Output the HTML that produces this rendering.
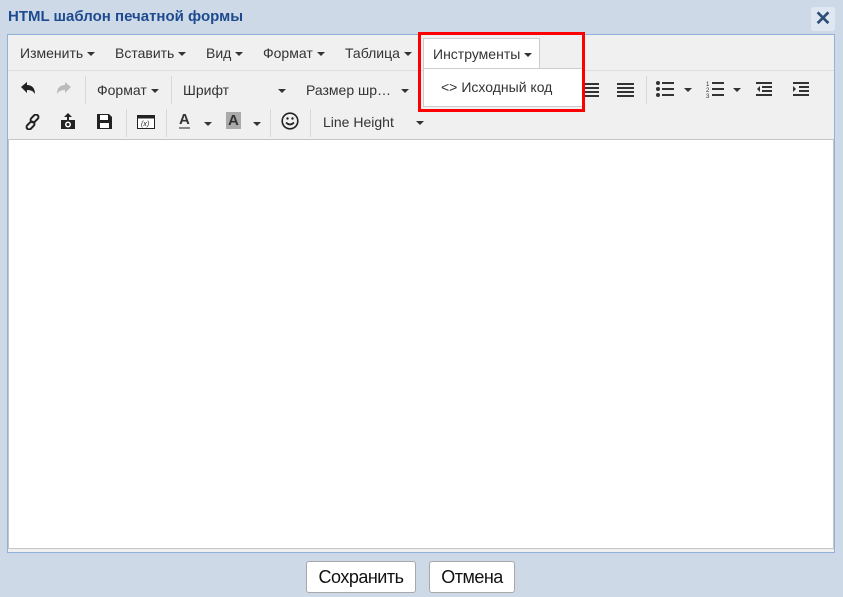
<!DOCTYPE html>
<html><head><meta charset="utf-8"><style>
*{box-sizing:border-box;margin:0;padding:0}
body{width:843px;height:597px;background:#cdd9e6;font-family:"Liberation Sans",sans-serif;position:relative;overflow:hidden;font-size:14px;color:#333}
.a{position:absolute;white-space:nowrap}
.title{left:8px;top:8px;font-weight:bold;font-size:15px;color:#1e4b8f}
.close{left:811px;top:7px;width:24px;height:24px;background:#dfe8f2;border-radius:3px;color:#2d4f7a;font-size:20px;font-weight:bold;text-align:center;line-height:24px}
.panel{left:7px;top:34px;width:828px;height:519px;border:1px solid #8fb1dc;background:#f0f0f0}
.menu span{position:absolute;top:10px;font-size:14px;color:#333}
.car{display:inline-block;width:0;height:0;border-left:4px solid transparent;border-right:4px solid transparent;border-top:4px solid #333;vertical-align:middle;margin-left:4px}
.edit{left:8px;top:139px;width:826px;height:410px;background:#fff;border:1px solid #c5c5c5}
.sep{position:absolute;width:1px;height:28px;background:#d8d8d8}
.tb{position:absolute;font-size:14px;color:#333;white-space:nowrap}
.btn{top:561px;height:32px;background:#fff;border:1px solid #a8a8a8;border-radius:3px;font-size:18px;text-align:center;line-height:30px;color:#111;letter-spacing:-0.5px}
</style></head><body>
<div class="a title">HTML шаблон печатной формы</div>
<div class="a close">✕</div>
<div class="a panel"></div>
<div class="a" style="left:8px;top:70px;width:826px;height:1px;background:#ddd"></div>
<div class="a menu" style="left:8px;top:35px;width:826px;height:35px">
<span style="left:12px">Изменить<i class="car"></i></span>
<span style="left:107px">Вставить<i class="car"></i></span>
<span style="left:198px">Вид<i class="car"></i></span>
<span style="left:255px">Формат<i class="car"></i></span>
<span style="left:337px">Таблица<i class="car"></i></span>
</div>
<!-- row 1 -->
<svg class="a" style="left:20px;top:82px" width="16" height="15"><path d="M1 5l6-5v3c5 0 8 3 8 9-2-3-4-4-8-4v3z" fill="#222"/></svg>
<svg class="a" style="left:56px;top:82px" width="16" height="15"><path d="M15 5l-6-5v3c-5 0-8 3-8 9 2-3 4-4 8-4v3z" fill="#bbb"/></svg>
<div class="sep" style="left:85px;top:76px"></div>
<div class="tb" style="left:97px;top:82px">Формат<i class="car"></i></div>
<div class="sep" style="left:171px;top:76px"></div>
<div class="tb" style="left:183px;top:82px">Шрифт</div><div class="tb" style="left:274px;top:82px"><i class="car"></i></div>
<div class="tb" style="left:306px;top:82px">Размер шр…<i class="car" style="margin-left:10px"></i></div>
<svg class="a" style="left:583px;top:82px" width="60" height="16"><g fill="#333"><rect x="0" y="1" width="16" height="2"/><rect x="0" y="5" width="16" height="2"/><rect x="0" y="9" width="16" height="2"/><rect x="0" y="13" width="16" height="2"/><rect x="34" y="1" width="17" height="2"/><rect x="34" y="5" width="17" height="2"/><rect x="34" y="9" width="17" height="2"/><rect x="34" y="13" width="17" height="2"/></g></svg>
<div class="sep" style="left:646px;top:76px"></div>
<svg class="a" style="left:656px;top:81px" width="160" height="18"><g fill="#333"><circle cx="2" cy="2" r="2"/><circle cx="2" cy="8" r="2"/><circle cx="2" cy="14" r="2"/><rect x="6" y="1" width="12" height="2"/><rect x="6" y="7" width="12" height="2"/><rect x="6" y="13" width="12" height="2"/><path d="M28 7h8l-4 4z"/><text x="50" y="5" font-size="6">1</text><text x="50" y="11" font-size="6">2</text><text x="50" y="17" font-size="6">3</text><rect x="56" y="1" width="12" height="2"/><rect x="56" y="7" width="12" height="2"/><rect x="56" y="13" width="12" height="2"/><path d="M77 7h8l-4 4z"/><rect x="100" y="1" width="16" height="2"/><rect x="106" y="5" width="10" height="2"/><rect x="106" y="9" width="10" height="2"/><rect x="100" y="13" width="16" height="2"/><path d="M104 5v6l-3-3z"/><rect x="137" y="1" width="16" height="2"/><rect x="143" y="5" width="10" height="2"/><rect x="143" y="9" width="10" height="2"/><rect x="137" y="13" width="16" height="2"/><path d="M137 5v6l3-3z"/></g></svg>
<!-- row 2 -->
<svg class="a" style="left:25px;top:114px" width="16" height="16"><g fill="none" stroke="#222" stroke-width="2"><rect x="7" y="0" width="5" height="9" rx="2.5" transform="rotate(45 9.5 4.5)"/><rect x="3" y="7" width="5" height="9" rx="2.5" transform="rotate(45 5.5 11.5)"/></g></svg>
<svg class="a" style="left:60px;top:113px" width="16" height="17"><path d="M8 0l4 4H9v3H7V4H4z M1 7h14v9H1z" fill="#222"/><circle cx="8" cy="11.5" r="3" fill="#fff"/><circle cx="8" cy="11.5" r="1.5" fill="#222"/></svg>
<svg class="a" style="left:97px;top:114px" width="15" height="15"><path d="M0 0h12l3 3v12H0z" fill="#222"/><rect x="3" y="1" width="8" height="5" fill="#fff"/><rect x="3" y="9" width="9" height="5" fill="#fff"/></svg>
<div class="sep" style="left:126px;top:109px"></div>
<svg class="a" style="left:137px;top:115px" width="18" height="14"><rect x="0.5" y="0.5" width="17" height="13" fill="#fff" stroke="#222"/><rect x="0.5" y="0.5" width="17" height="3" fill="#222"/><text x="4" y="11" font-size="7" font-style="italic" fill="#222">(x)</text></svg>
<div class="sep" style="left:166px;top:109px"></div>
<div class="tb" style="left:179px;top:112px;font-weight:bold;font-size:15px;border-bottom:2px solid #888;line-height:15px">A</div><div class="tb" style="left:200px;top:115px"><i class="car"></i></div>
<div class="tb" style="left:226px;top:112px;font-weight:bold;font-size:15px;background:#aaa;padding:0 2px;line-height:17px">A</div><div class="tb" style="left:249px;top:115px"><i class="car"></i></div>
<div class="sep" style="left:270px;top:109px"></div>
<svg class="a" style="left:281px;top:112px" width="18" height="18"><g fill="none" stroke="#222" stroke-width="1.6"><circle cx="9" cy="9" r="7.8"/><path d="M5 10.5q4 4 8 0"/></g><circle cx="6.5" cy="6.5" r="1.2" fill="#222"/><circle cx="11.5" cy="6.5" r="1.2" fill="#222"/></svg>
<div class="sep" style="left:310px;top:109px"></div>
<div class="tb" style="left:323px;top:114px">Line Height</div><div class="tb" style="left:412px;top:114px"><i class="car"></i></div>
<!-- dropdown -->
<div class="a" style="left:423px;top:38px;width:117px;height:31px;background:#fff;border:1px solid #ccc;border-bottom:none;padding:7px 0 0 9px;font-size:14px">Инструменты<i class="car"></i></div>
<div class="a" style="left:423px;top:68px;width:160px;height:39px;background:#fff;border:1px solid #ccc;padding:10px 17px;font-size:14px"><b style="font-weight:normal;margin-right:4px">&lt;&gt;</b>Исходный код</div>
<div class="a" style="left:418px;top:32px;width:167px;height:80px;border:3px solid #f00"></div>
<div class="a edit"></div>
<div class="a btn" style="left:306px;width:110px">Сохранить</div>
<div class="a btn" style="left:429px;width:86px">Отмена</div>
</body></html>
